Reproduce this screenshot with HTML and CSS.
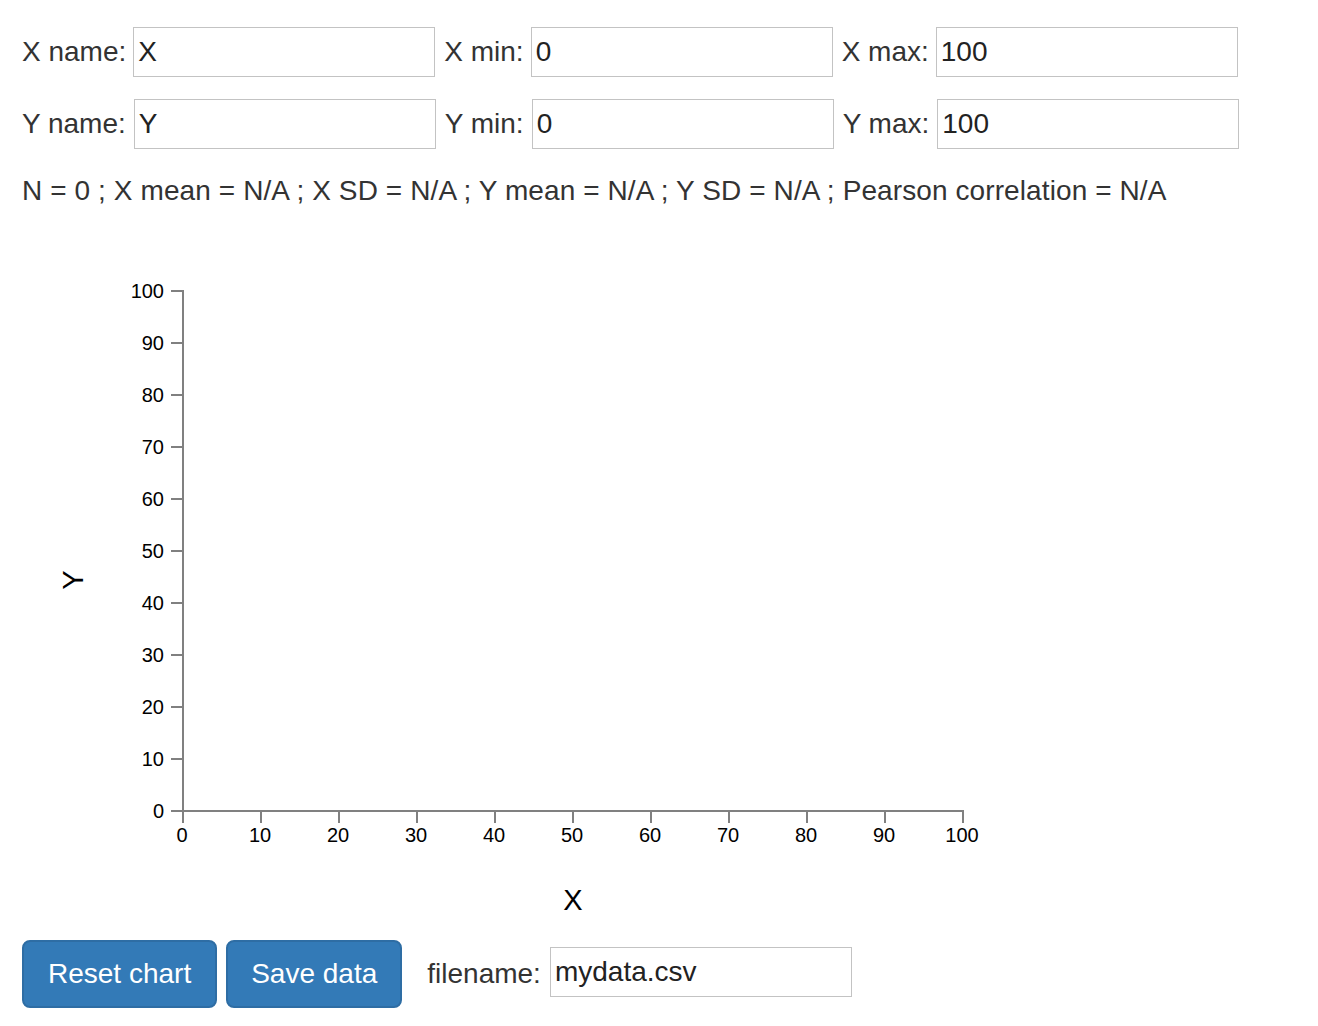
FILE: index.html
```html
<!DOCTYPE html>
<html>
<head>
<meta charset="utf-8">
<link rel="stylesheet" href="styles.css">
</head>
<body>
<div class="page">
  <div class="row">
    <label class="lbl">X name:</label><input class="field" value="X">
    <label class="lbl">X min:</label><input class="field" value="0">
    <label class="lbl">X max:</label><input class="field" value="100">
  </div>
  <div class="row row2">
    <label class="lbl">Y name:</label><input class="field" value="Y">
    <label class="lbl">Y min:</label><input class="field" value="0">
    <label class="lbl">Y max:</label><input class="field" value="100">
  </div>
  <div class="stats">N = 0 ; X mean = N/A ; X SD = N/A ; Y mean = N/A ; Y SD = N/A ; Pearson correlation = N/A</div>
  <svg class="chart" width="1000" height="729" viewBox="0 0 1000 729">
    <g class="axis">
      <path d="M149,80H161V600H149" />
      <path d="M161,612V600H941V612" />
      <g class="ticks">
        <line x1="149" y1="80" x2="161" y2="80"/>
        <line x1="149" y1="132" x2="161" y2="132"/>
        <line x1="149" y1="184" x2="161" y2="184"/>
        <line x1="149" y1="236" x2="161" y2="236"/>
        <line x1="149" y1="288" x2="161" y2="288"/>
        <line x1="149" y1="340" x2="161" y2="340"/>
        <line x1="149" y1="392" x2="161" y2="392"/>
        <line x1="149" y1="444" x2="161" y2="444"/>
        <line x1="149" y1="496" x2="161" y2="496"/>
        <line x1="149" y1="548" x2="161" y2="548"/>
        <line x1="161" y1="600" x2="161" y2="612"/>
        <line x1="239" y1="600" x2="239" y2="612"/>
        <line x1="317" y1="600" x2="317" y2="612"/>
        <line x1="395" y1="600" x2="395" y2="612"/>
        <line x1="473" y1="600" x2="473" y2="612"/>
        <line x1="551" y1="600" x2="551" y2="612"/>
        <line x1="629" y1="600" x2="629" y2="612"/>
        <line x1="707" y1="600" x2="707" y2="612"/>
        <line x1="785" y1="600" x2="785" y2="612"/>
        <line x1="863" y1="600" x2="863" y2="612"/>
        <line x1="941" y1="600" x2="941" y2="612"/>
      </g>
    </g>
    <g class="ylabels">
      <text x="142" y="87">100</text>
      <text x="142" y="139">90</text>
      <text x="142" y="191">80</text>
      <text x="142" y="243">70</text>
      <text x="142" y="295">60</text>
      <text x="142" y="347">50</text>
      <text x="142" y="399">40</text>
      <text x="142" y="451">30</text>
      <text x="142" y="503">20</text>
      <text x="142" y="555">10</text>
      <text x="142" y="607">0</text>
    </g>
    <g class="xlabels">
      <text x="160" y="631">0</text>
      <text x="238" y="631">10</text>
      <text x="316" y="631">20</text>
      <text x="394" y="631">30</text>
      <text x="472" y="631">40</text>
      <text x="550" y="631">50</text>
      <text x="628" y="631">60</text>
      <text x="706" y="631">70</text>
      <text x="784" y="631">80</text>
      <text x="862" y="631">90</text>
      <text x="940" y="631">100</text>
    </g>
    <text class="axis-title" x="551" y="699">X</text>
    <text class="axis-title" transform="translate(61,369) rotate(-90)">Y</text>
  </svg>
  <div class="actions">
    <button class="btn">Reset chart</button>
    <button class="btn btn2">Save data</button>
    <label class="lbl fname">filename:</label><input class="field" value="mydata.csv">
  </div>
</div>
</body>
</html>
```
FILE: styles.css
```css
html, body {
  margin: 0;
  padding: 0;
  background: #fff;
}
body {
  font-family: "Liberation Sans", Arial, Helvetica, sans-serif;
  font-size: 28px;
  line-height: 40px;
  color: #333;
}
.page {
  padding: 27px 0 0 22px;
}
.row {
  display: flex;
  align-items: center;
  height: 50px;
}
.row2 {
  margin-top: 22px;
}
.lbl {
  margin-right: 7px;
  white-space: nowrap;
}
.row2 .lbl {
  margin-right: 8px;
}
.field {
  box-sizing: border-box;
  width: 302px;
  height: 50px;
  margin: 0 9px 0 0;
  padding: 0 4px;
  border: 1px solid #c3c3c3;
  border-radius: 0;
  font-family: inherit;
  font-size: 28px;
  color: #222;
  background: #fff;
  outline: none;
}
.stats {
  margin-top: 22px;
  white-space: nowrap;
  letter-spacing: 0.1px;
}
.chart {
  display: block;
  margin-top: 0;
}
.axis path,
.axis line {
  fill: none;
  stroke: #808080;
  stroke-width: 2;
}
.ylabels text,
.xlabels text {
  font-family: "Liberation Sans", Arial, sans-serif;
  font-size: 20px;
  fill: #000;
}
.ylabels text {
  text-anchor: end;
}
.xlabels text {
  text-anchor: middle;
}
.axis-title {
  font-family: "Liberation Sans", Arial, sans-serif;
  font-size: 29px;
  fill: #000;
  text-anchor: middle;
}
.actions {
  display: flex;
  align-items: center;
  height: 68px;
}
.btn {
  box-sizing: border-box;
  height: 68px;
  padding: 0 24px;
  margin: 0 9px 0 0;
  background: #337ab7;
  border: 2px solid #2e6da4;
  border-radius: 8px;
  color: #fff;
  font-family: inherit;
  font-size: 28px;
  line-height: 40px;
  cursor: pointer;
}
.btn2 {
  padding: 0 23px;
  margin-right: 25px;
}
.fname {
  margin-right: 9px;
}
.actions .field {
  margin-bottom: 4px;
}
```
